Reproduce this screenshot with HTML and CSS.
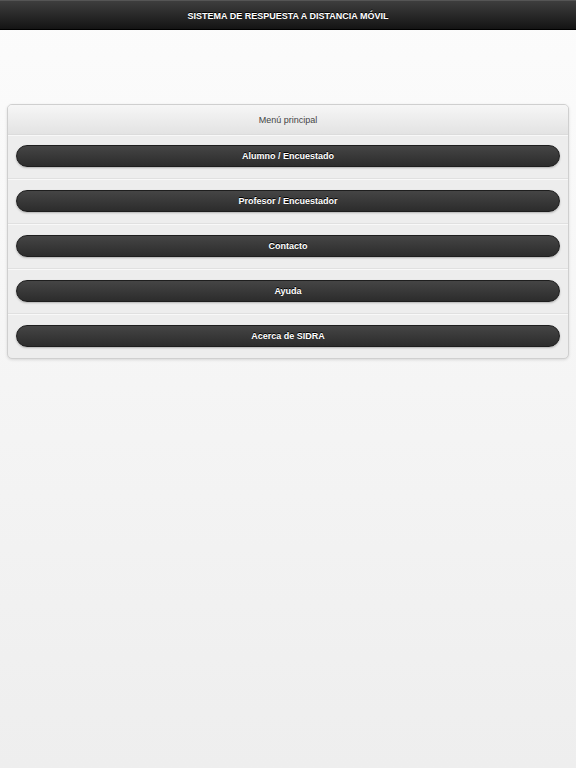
FILE: index.html
```html
<!DOCTYPE html>
<html lang="es">
<head>
<meta charset="utf-8">
<title>SIDRA</title>
<link rel="stylesheet" href="styles.css">
</head>
<body>
<header class="topbar">
  <h1 class="title">SISTEMA DE RESPUESTA A DISTANCIA MÓVIL</h1>
</header>
<main class="content">
  <section class="menu">
    <div class="menu-head">Menú principal</div>
    <div class="menu-row"><a class="btn" href="#">Alumno / Encuestado</a></div>
    <div class="menu-row"><a class="btn" href="#">Profesor / Encuestador</a></div>
    <div class="menu-row"><a class="btn" href="#">Contacto</a></div>
    <div class="menu-row"><a class="btn" href="#">Ayuda</a></div>
    <div class="menu-row"><a class="btn" href="#">Acerca de SIDRA</a></div>
  </section>
</main>
</body>
</html>
```
FILE: styles.css
```css
html, body {
  margin: 0;
  padding: 0;
}
body {
  width: 576px;
  height: 768px;
  overflow: hidden;
  font-family: "Liberation Sans", Arial, sans-serif;
  background: linear-gradient(#fcfcfc, #eeeeee);
}
.topbar {
  background: linear-gradient(#3e3e3e, #141414);
  border-top: 1px solid #555;
  border-bottom: 1px solid #000;
  display: flex;
  align-items: center;
  justify-content: center;
  box-sizing: border-box;
  height: 30px;
  padding-top: 1px;
}
.title {
  margin: 0;
  color: #fff;
  font-size: 9px;
  font-weight: bold;
  letter-spacing: 0;
  text-shadow: 0 -1px 0 #000;
}
.content {
  padding: 74px 7px 0 7px;
}
.menu {
  border: 1px solid #cfcfcf;
  border-radius: 5px;
  background: #ededed;
  box-shadow: 0 1px 3px rgba(0,0,0,0.12);
  overflow: hidden;
}
.menu-head {
  height: 29px;
  display: flex;
  align-items: center;
  justify-content: center;
  font-size: 9px;
  color: #444;
  background: linear-gradient(#f6f6f6, #e3e3e3);
  border-bottom: 1px solid #dcdcdc;
}
.menu-row {
  padding: 11px 8px 11px 8px;
  border-top: 1px solid #e0e0e0;
  box-shadow: inset 0 1px 0 #f8f8f8;
}
.menu-head + .menu-row {
  border-top: none;
  padding-top: 10px;
}
.btn {
  display: flex;
  align-items: center;
  justify-content: center;
  height: 22px;
  box-sizing: border-box;
  border: 1px solid #1e1e1e;
  border-radius: 11px;
  background: linear-gradient(#454545, #2c2c2c);
  box-shadow: 0 1px 2px rgba(0,0,0,0.25);
  color: #fff;
  font-size: 9px;
  font-weight: bold;
  text-decoration: none;
  text-shadow: 0 -1px 0 #000;
}
```
